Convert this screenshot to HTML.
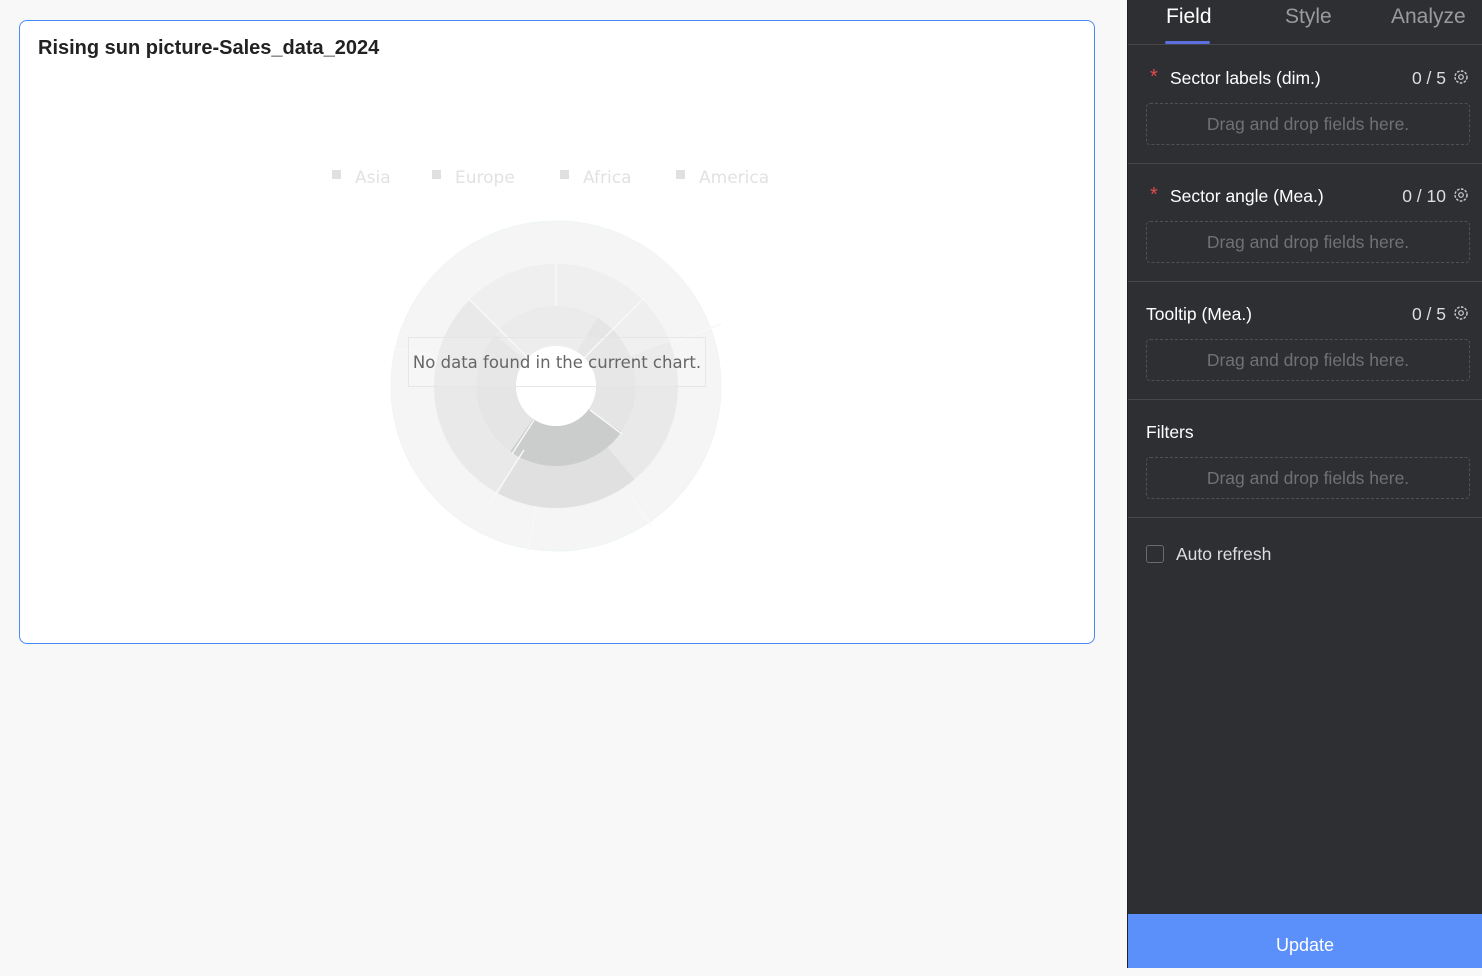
<!DOCTYPE html>
<html><head><meta charset="utf-8"><style>
*{margin:0;padding:0;box-sizing:border-box}
body{width:1482px;height:968px;background:#f8f8f8;font-family:"Liberation Sans",sans-serif;position:relative;overflow:hidden}
.card{position:absolute;left:19px;top:20px;width:1076px;height:624px;background:#fff;border:1.5px solid #4a8af4;border-radius:8px}
.title{position:absolute;left:18px;top:16px;font-size:20px;font-weight:bold;color:#222}
.legend{position:absolute;top:147px;font-size:19px;color:#e2e2e2;font-family:"DejaVu Sans",sans-serif;font-size:17px}
.legend i{display:inline-block;width:9px;height:9px;background:#e0e0e0;margin-right:14px;vertical-align:4px}
.nodata{position:absolute;left:408px;top:337px;width:298px;height:50px;border:1px solid #e6e6e6;font-size:16.5px;font-family:"DejaVu Sans",sans-serif;color:#666;line-height:50px;text-align:center;background:rgba(255,255,255,0.1);white-space:nowrap}
.panel{position:absolute;left:1127px;top:0;width:355px;height:968px;background:#2e2f33;color:#eee;border-left:1px solid #222}
.tab{position:absolute;top:5px;font-size:21px;color:#9a9b9e}
.tabline{position:absolute;left:0;right:0;top:44px;border-top:1px solid #47484c}
.sec{position:absolute;left:0;right:0;height:118px;border-bottom:1px solid #47484c}
.lab{position:absolute;left:42px;top:22px;font-size:17.5px;color:#fff}
.star{position:absolute;left:22px;top:20px;color:#e34b4b;font-size:20px}
.cnt{position:absolute;right:36px;top:22px;font-size:17.5px;color:#ddd}
.gear{position:absolute;right:13px;top:23px}
.drop{position:absolute;left:18px;right:12px;top:57px;height:42px;border:1px dashed #505156;border-radius:4px;text-align:center;line-height:40px;color:#707175;font-size:17.5px}
.upd{position:absolute;left:0;right:0;bottom:0;height:54px;background:#5b8ff9;color:#fff;text-align:center;line-height:62px;font-size:18px}
</style></head><body>
<div class="card">
<div class="title">Rising sun picture-Sales_data_2024</div>
<div class="legend" style="left:312px"><i></i>Asia</div>
<div class="legend" style="left:412px"><i></i>Europe</div>
<div class="legend" style="left:540px"><i></i>Africa</div>
<div class="legend" style="left:656px"><i></i>America</div>
</div>
<svg style="position:absolute;left:0;top:0" width="1120" height="968">
<g transform="translate(556,386)" fill="none">
<circle r="143" stroke="#f4f5f4" stroke-width="44"/>
<circle r="165" stroke="#eef6ee" stroke-width="1"/>
<circle r="101" stroke="#e9e9e9" stroke-width="42"/>
<circle r="101" stroke="#efefef" stroke-width="42" stroke-dasharray="200 635" transform="rotate(225)"/>
<circle r="101" stroke="#e0e0e0" stroke-width="42" stroke-dasharray="120 635" transform="rotate(50)"/>
<circle r="60" stroke="#e5e5e5" stroke-width="40"/>
<circle r="60" stroke="#cbcccc" stroke-width="40" stroke-dasharray="94 377" transform="rotate(35)"/>
<circle r="60" stroke="#ebebeb" stroke-width="40" stroke-dasharray="85 377" transform="rotate(220)"/>
<circle r="40" fill="#fff"/>
<g stroke="#f8f8f8" stroke-width="1.5">
<line x1="0" y1="-80" x2="0" y2="-122"/><line x1="-57" y1="-57" x2="-88" y2="-88"/>
<line x1="57" y1="-57" x2="88" y2="-88"/><line x1="-32" y1="64" x2="-68" y2="120"/>
<line x1="28" y1="-28" x2="57" y2="-57"/><line x1="-28" y1="-28" x2="-57" y2="-57"/>
<line x1="34" y1="24" x2="66" y2="48"/><line x1="-22" y1="34" x2="-44" y2="68"/>
<line x1="120" y1="-45" x2="165" y2="-62"/><line x1="-120" y1="-30" x2="-162" y2="-38"/>
<line x1="75" y1="110" x2="95" y2="140"/><line x1="-20" y1="120" x2="-28" y2="165"/>
</g>
</g>
</svg>
<div class="nodata">No data found in the current chart.</div>
<div class="panel">
<div class="tab" style="left:38px;color:#fff">Field</div>
<div style="position:absolute;left:37px;top:41px;width:45px;height:3px;background:#5b6fe0;border-radius:2px"></div>
<div class="tab" style="left:157px">Style</div>
<div class="tab" style="left:263px">Analyze</div>
<div class="tabline"></div>
<div class="sec" style="top:46px"><span class="star">*</span><div class="lab">Sector labels (dim.)</div><div class="cnt">0 / 5</div>
<svg class="gear" width="16" height="16" viewBox="0 0 16 16"><circle cx="8" cy="8" r="6" fill="none" stroke="#ccc" stroke-width="1.4" stroke-dasharray="2.6 1.4"/><circle cx="8" cy="8" r="2.3" fill="none" stroke="#ccc" stroke-width="1.2"/></svg>
<div class="drop">Drag and drop fields here.</div></div>
<div class="sec" style="top:164px"><span class="star">*</span><div class="lab">Sector angle (Mea.)</div><div class="cnt">0 / 10</div>
<svg class="gear" width="16" height="16" viewBox="0 0 16 16"><circle cx="8" cy="8" r="6" fill="none" stroke="#ccc" stroke-width="1.4" stroke-dasharray="2.6 1.4"/><circle cx="8" cy="8" r="2.3" fill="none" stroke="#ccc" stroke-width="1.2"/></svg>
<div class="drop">Drag and drop fields here.</div></div>
<div class="sec" style="top:282px"><div class="lab" style="left:18px">Tooltip (Mea.)</div><div class="cnt">0 / 5</div>
<svg class="gear" width="16" height="16" viewBox="0 0 16 16"><circle cx="8" cy="8" r="6" fill="none" stroke="#ccc" stroke-width="1.4" stroke-dasharray="2.6 1.4"/><circle cx="8" cy="8" r="2.3" fill="none" stroke="#ccc" stroke-width="1.2"/></svg>
<div class="drop">Drag and drop fields here.</div></div>
<div class="sec" style="top:400px"><div class="lab" style="left:18px">Filters</div>
<div class="drop">Drag and drop fields here.</div></div>
<div style="position:absolute;left:18px;top:545px;width:18px;height:18px;border:1px solid #6a6b70;border-radius:3px"></div>
<div style="position:absolute;left:48px;top:544px;font-size:17.5px;color:#ddd">Auto refresh</div>
<div class="upd">Update</div>
</div>
</body></html>
